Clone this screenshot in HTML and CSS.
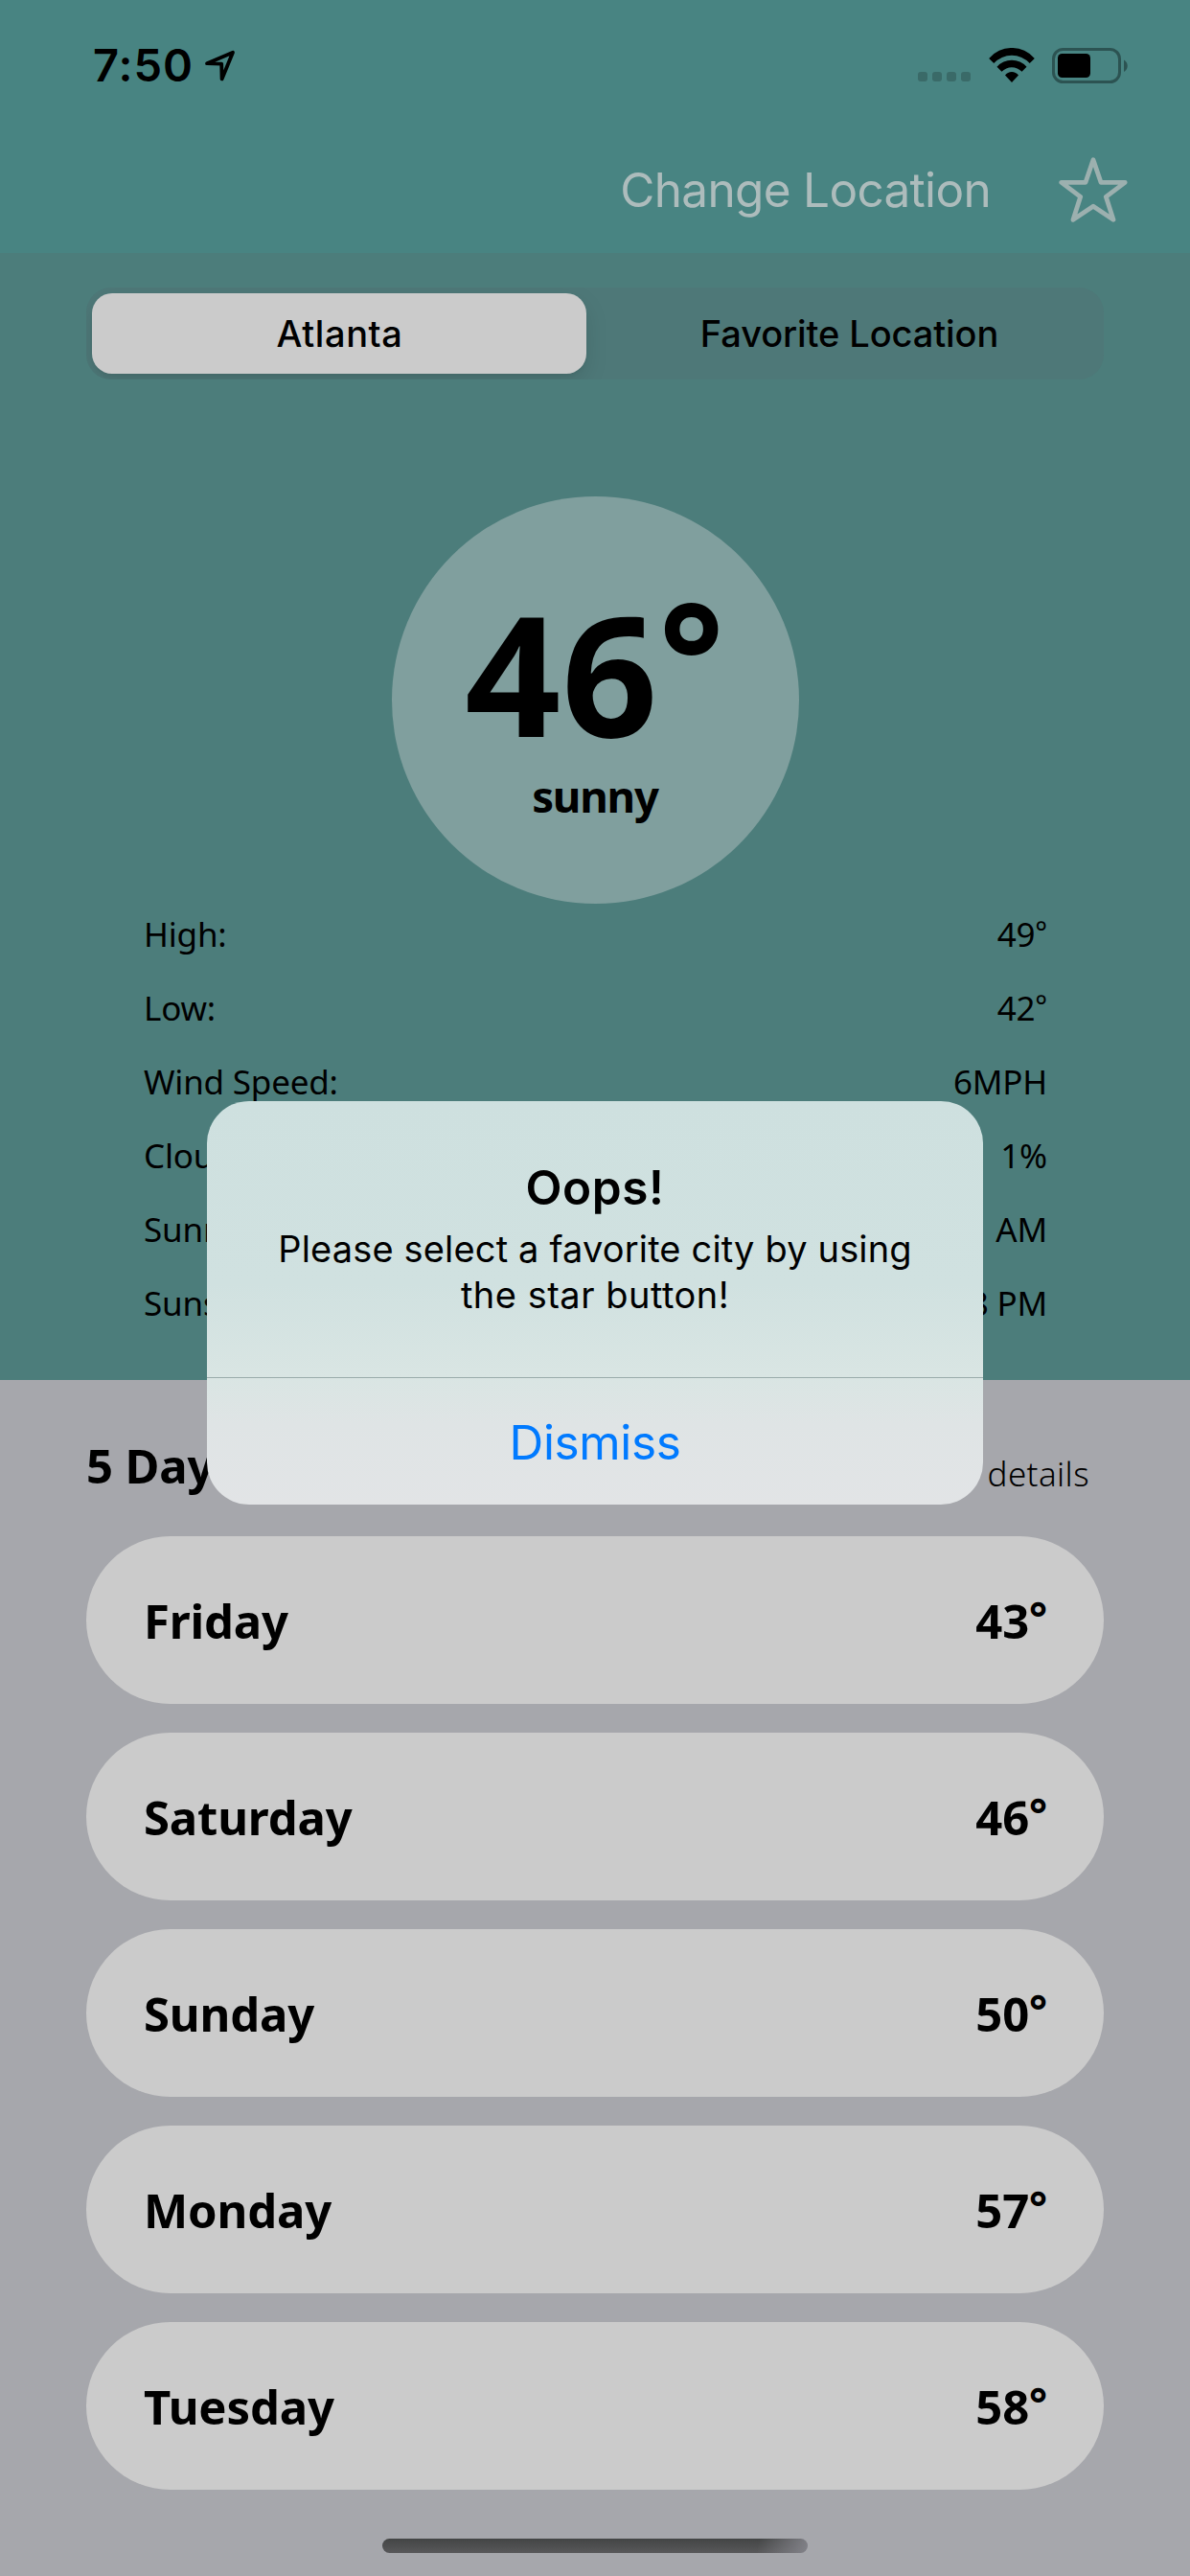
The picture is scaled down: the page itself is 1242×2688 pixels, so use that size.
FILE: index.html
```html
<!DOCTYPE html>
<html lang="en">
<head>
<meta charset="utf-8">
<title>Weather</title>
<link rel="stylesheet" href="styles.css">
</head>
<body>
<div class="screen">
  <header class="top">
    <div class="status">
      <span class="clock">7:50</span>
      <svg class="arrow" width="34" height="36" viewBox="212 49 34 36"><path d="M215 65.2L242 53.8L230.6 81.4L230.2 65.6Z" fill="none" stroke="#000" stroke-width="3.8" stroke-linejoin="round"/></svg>
      <div class="dots"><i></i><i></i><i></i><i></i></div>
      <svg class="wifi" width="48" height="37" viewBox="1031.5 49 48 37"><path d="M1031.7 60A31.2 31.2 0 0 1 1079.3 60L1074.2 65A25.4 25.4 0 0 0 1036.8 65ZM1040 68.7A20.7 20.7 0 0 1 1071 68.7L1066 73.8A14.5 14.5 0 0 0 1045 73.8ZM1048.5 77.5A8.7 8.7 0 0 1 1062.5 77.5L1055.5 85Z"/></svg>
      <svg class="battery" width="80" height="37" viewBox="1098 49 80 37"><rect x="1099.5" y="50.5" width="69" height="34" rx="10" fill="none" stroke="#2c5352" stroke-width="3"/><rect x="1104" y="55" width="34" height="25" rx="4.5"/><path d="M1173 61.5C1178 64.5 1178 71 1173 74Z" fill="#2c5352"/></svg>
    </div>
    <nav class="nav">
      <span class="change">Change Location</span>
      <svg width="72" height="70" viewBox="1105 163 72 70"><path d="M1141 166.8L1149 190.3L1174.2 190.3L1154.3 205.3L1162 229.3L1141 215.2L1120 229.3L1127.7 205.3L1107.8 190.3L1133 190.3Z" fill="none" stroke="#9cb0af" stroke-width="4.8" stroke-linejoin="round"/></svg>
    </nav>
  </header>

  <main class="current">
    <div class="segmented">
      <div class="segment selected">Atlanta</div>
      <div class="segment">Favorite Location</div>
    </div>
    <div class="circle">
      <div class="temp">46<sup>°</sup></div>
      <div class="sky">sunny</div>
    </div>
    <dl class="facts">
      <div class="fact"><dt>High:</dt><dd>49<sup>°</sup></dd></div>
      <div class="fact"><dt>Low:</dt><dd>42<sup>°</sup></dd></div>
      <div class="fact"><dt>Wind Speed:</dt><dd>6MPH</dd></div>
      <div class="fact"><dt>Clouds:</dt><dd>1%</dd></div>
      <div class="fact"><dt>Sunrise:</dt><dd>7:21 AM</dd></div>
      <div class="fact"><dt>Sunset:</dt><dd>5:38 PM</dd></div>
    </dl>
  </main>

  <section class="forecast">
    <div class="heading"><h2>5 Day</h2><span>details</span></div>
    <div class="days">
      <div class="day"><span>Friday</span><span>43<sup>°</sup></span></div>
      <div class="day"><span>Saturday</span><span>46<sup>°</sup></span></div>
      <div class="day"><span>Sunday</span><span>50<sup>°</sup></span></div>
      <div class="day"><span>Monday</span><span>57<sup>°</sup></span></div>
      <div class="day"><span>Tuesday</span><span>58<sup>°</sup></span></div>
    </div>
    <div class="home"></div>
  </section>

  <div class="alert">
    <div class="message">
      <h1>Oops!</h1>
      <p><span>Please select a favorite city by using</span><br><span class="second">the star button!</span></p>
    </div>
    <div class="dismiss">Dismiss</div>
  </div>
</div>
</body>
</html>
```
FILE: styles.css
```css
* { box-sizing: border-box; margin: 0; padding: 0; }
body { width: 1242px; font-family: "Noto Sans", sans-serif; color: #000; }
svg { display: block; flex: none; }
sup { font-size: 0.92em; line-height: 0; vertical-align: 0.14em; }

.screen {
  position: relative;
  width: 1242px;
  height: 2688px;
  overflow: hidden;
  display: flex;
  flex-direction: column;
  background: #a6a7ac;
}

.top { height: 264px; background: #488482; font-family: Inter, sans-serif; }
.status { display: flex; align-items: center; height: 136px; padding: 0 64px 0 97px; }
.clock { font-size: 47px; font-weight: 600; letter-spacing: 1px; line-height: 60px; }
.arrow { margin: 0 auto 0 11px; }
.dots { display: flex; gap: 5px; align-self: flex-end; margin: 0 18.5px 51px 0; }
.dots i { width: 10px; height: 10px; border-radius: 3px; background: #3a6a68; }
.battery { margin-left: 18.5px; }

.nav {
  display: flex;
  align-items: center;
  justify-content: flex-end;
  gap: 71px;
  height: 124px;
  padding-right: 65px;
}
.change { font-size: 49.5px; letter-spacing: -0.68px; color: #adbcbc; }

.current {
  display: flex;
  flex-direction: column;
  height: 1176px;
  padding: 36px 90px 0;
  background: #4c7d7b;
}
.segmented {
  display: flex;
  height: 96px;
  padding: 6px 0 6px 6px;
  border-radius: 26px;
  background: #4e7878;
  overflow: hidden;
  font: 500 38px/84px Inter, sans-serif;
}
.segment { flex: 1 1 0; padding-left: 9px; text-align: center; letter-spacing: -0.1px; }
.selected {
  flex: 0 0 516px;
  padding-left: 1px;
  border-radius: 21px;
  background: #cbcbcb;
  box-shadow: 0 9px 24px rgba(0, 0, 0, 0.1), 0 3px 3px rgba(0, 0, 0, 0.04);
  letter-spacing: 0.6px;
}

.circle {
  align-self: center;
  width: 425px;
  height: 425px;
  margin-top: 122px;
  padding-top: 83px;
  border-radius: 50%;
  background: #809f9e;
  text-align: center;
  font-weight: 700;
}
.temp { font-size: 175px; line-height: 200px; letter-spacing: 1px; }
.sky { font-size: 45.5px; line-height: 59px; letter-spacing: -1.2px; }

.facts { margin-top: -7px; padding: 0 59px 0 60px; }
.fact { display: flex; justify-content: space-between; font-size: 35px; line-height: 77px; letter-spacing: -0.2px; }
.fact sup { font-size: 0.86em; }

.forecast { flex: 1; display: flex; flex-direction: column; padding: 0 90px; }
.heading { display: flex; justify-content: space-between; height: 163px; padding-right: 15px; }
.heading h2 { font-size: 49px; line-height: 178px; letter-spacing: -0.1px; }
.heading span { font-size: 35px; font-weight: 300; line-height: 195px; letter-spacing: 0.4px; }
.days { display: flex; flex-direction: column; gap: 30px; }
.day {
  display: flex;
  justify-content: space-between;
  height: 175px;
  padding: 0 59px 0 60px;
  border-radius: 88px;
  background: #cbcbcb;
  font-size: 49px;
  font-weight: 700;
  line-height: 176px;
  letter-spacing: -0.15px;
}
.home {
  align-self: center;
  width: 444px;
  height: 15px;
  margin-top: 51px;
  border-radius: 8px;
  background:
    linear-gradient(100deg, transparent 88%, rgba(135, 135, 142, 0.9) 100%),
    linear-gradient(#434545, #58585a);
}

.alert {
  position: absolute;
  left: 216px;
  top: 1149px;
  width: 810px;
  height: 421px;
  border-radius: 44px;
  overflow: hidden;
  background: linear-gradient(#cee0df 0%, #d0e1e0 45%, #d9e5e3 68%, #dfe4e5 80%, #e2e4e6 100%);
  font-family: Inter, sans-serif;
  text-align: center;
}
.message { height: 289px; padding-top: 60px; border-bottom: 1px solid #9aacab; }
.message h1 { font-size: 49.5px; font-weight: 600; line-height: 60px; letter-spacing: 0.6px; }
.message p { margin-top: 10px; font-size: 38px; line-height: 48px; letter-spacing: 0.16px; }
.second { letter-spacing: 0.5px; }
.dismiss { font-size: 49.5px; line-height: 134px; letter-spacing: -0.38px; color: #007aff; }
```
